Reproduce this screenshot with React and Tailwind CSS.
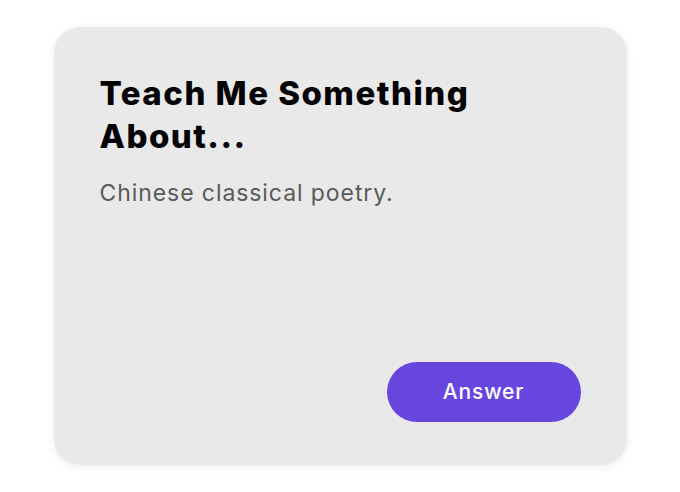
export default function App() {
  return (
    <div className="w-[680px] h-[492px] bg-white flex items-center justify-center" style={{ fontFamily: 'Inter, "Noto Sans", sans-serif' }}>
      <div className="w-[573px] h-[438px] rounded-[26px] bg-[#e9e9e9] shadow-[0_2px_8px_rgba(0,0,0,0.08)] pl-[46px] pr-[46px] pt-[45px] pb-[43px] flex flex-col">
        <h1 className="text-[33px] leading-[43px] font-extrabold text-black tracking-[0.045em] w-[420px]">
          Teach Me Something About...
        </h1>
        <p className="mt-[21px] text-[23px] leading-[28px] text-[#5a5a5a] tracking-[0.04em]">
          Chinese classical poetry.
        </p>
        <div className="mt-auto flex justify-end">
          <button className="w-[194px] h-[60px] rounded-full bg-[#6746e0] text-white text-[21px] font-medium tracking-[0.04em]">
            Answer
          </button>
        </div>
      </div>
    </div>
  )
}
